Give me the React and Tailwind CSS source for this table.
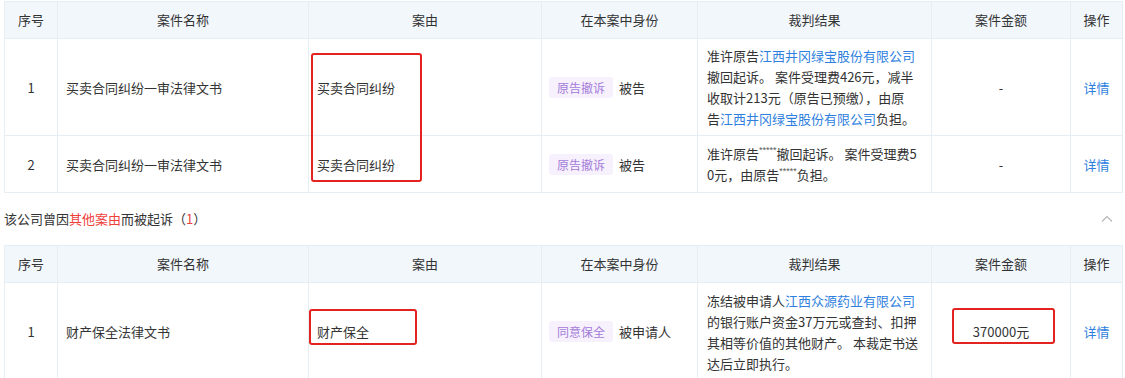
import React from "react";

const font = { fontFamily: '"Noto Sans CJK SC", "Liberation Sans", sans-serif' };

function Link({ children }) {
  return <span className="text-[#2f7fe0]">{children}</span>;
}

function Stars() {
  return (
    <span
      className="inline-block align-top text-[9px] leading-[14px] text-[#555]"
      style={{ fontFamily: '"Liberation Sans", sans-serif' }}
    >
      *****
    </span>
  );
}

function Tag({ children }) {
  return (
    <span className="inline-flex h-[21px] items-center rounded-[3px] bg-[#f7f1fd] px-[8px] text-[12px] leading-[21px] text-[#a47bd9]">
      {children}
    </span>
  );
}

function Header() {
  return (
    <thead>
      <tr className="h-[37px] bg-[#f2f7fc] text-[13px] text-[#333]">
        <th className="border border-[#e6edf3] p-0 font-normal">序号</th>
        <th className="border border-[#e6edf3] p-0 font-normal">案件名称</th>
        <th className="border border-[#e6edf3] p-0 font-normal">案由</th>
        <th className="border border-[#e6edf3] p-0 font-normal">在本案中身份</th>
        <th className="border border-[#e6edf3] p-0 font-normal">裁判结果</th>
        <th className="border border-[#e6edf3] p-0 font-normal">案件金额</th>
        <th className="border border-[#e6edf3] p-0 font-normal">操作</th>
      </tr>
    </thead>
  );
}

function Cols() {
  return (
    <colgroup>
      <col style={{ width: 53 }} />
      <col style={{ width: 251 }} />
      <col style={{ width: 233 }} />
      <col style={{ width: 156 }} />
      <col style={{ width: 234 }} />
      <col style={{ width: 139 }} />
      <col style={{ width: 52 }} />
    </colgroup>
  );
}

const td = "border border-[#e6edf3] px-[8px] py-0 align-middle";

function Row({ no, name, cause, tag, role, result, amount, h }) {
  return (
    <tr className={"text-[13px] leading-[21px] text-[#333] " + h}>
      <td className={td + " text-center"}>{no}</td>
      <td className={td}>{name}</td>
      <td className={td}>{cause}</td>
      <td className={td + " pl-[7px]"}>
        <div className="flex h-[21px] items-center gap-[6px]">
          <Tag>{tag}</Tag>
          <span>{role}</span>
        </div>
      </td>
      <td className={td + " pl-[9px]"}>
        {result.map((l, i) => (
          <div key={i} className="h-[21px] whitespace-nowrap leading-[21px]">{l}</div>
        ))}
      </td>
      <td className={td + " text-center"}>{amount}</td>
      <td className={td + " text-center text-[#2f7fe0]"}>详情</td>
    </tr>
  );
}

export default function App() {
  return (
    <div className="relative h-[378px] w-[1125px] overflow-hidden bg-white" style={font}>
      <div className="pl-[4px] pt-[1px]">
        <table className="w-[1118px] table-fixed border-collapse">
          <Cols />
          <Header />
          <tbody>
            <Row
              h="h-[97px]"
              no="1"
              name="买卖合同纠纷一审法律文书"
              cause="买卖合同纠纷"
              tag="原告撤诉"
              role="被告"
              amount="-"
              result={[
                <>准许原告<Link>江西井冈绿宝股份有限公司</Link></>,
                <>撤回起诉。 案件受理费426元，减半</>,
                <>收取计213元（原告已预缴），由原</>,
                <>告<Link>江西井冈绿宝股份有限公司</Link>负担。</>,
              ]}
            />
            <Row
              h="h-[57px]"
              no="2"
              name="买卖合同纠纷一审法律文书"
              cause="买卖合同纠纷"
              tag="原告撤诉"
              role="被告"
              amount="-"
              result={[
                <>准许原告<Stars />撤回起诉。 案件受理费5</>,
                <>0元，由原告<Stars />负担。</>,
              ]}
            />
          </tbody>
        </table>

        <div className="flex h-[52px] items-center justify-between pr-[10px] text-[13px] text-[#333]">
          <span>
            该公司曾因<span className="text-[#f0403c]">其他案由</span>而被起诉（<span className="text-[#f0403c]">1</span>）
          </span>
          <svg width="12" height="8" viewBox="0 0 12 8" className="mr-[2px]">
            <path d="M1 6.5 L6 1.5 L11 6.5" fill="none" stroke="#b5b5b5" strokeWidth="1.1" />
          </svg>
        </div>

        <table className="w-[1118px] table-fixed border-collapse">
          <Cols />
          <Header />
          <tbody>
            <Row
              h="h-[98px]"
              no="1"
              name="财产保全法律文书"
              cause="财产保全"
              tag="同意保全"
              role="被申请人"
              amount="370000元"
              result={[
                <>冻结被申请人<Link>江西众源药业有限公司</Link></>,
                <>的银行账户资金37万元或查封、扣押</>,
                <>其相等价值的其他财产。 本裁定书送</>,
                <>达后立即执行。</>,
              ]}
            />
          </tbody>
        </table>
      </div>

      <div className="pointer-events-none absolute left-[311px] top-[53px] h-[129px] w-[111px] rounded-[3px] border-2 border-[#e3231f]" />
      <div className="pointer-events-none absolute left-[309px] top-[309px] h-[36px] w-[108px] rounded-[3px] border-2 border-[#e3231f]" />
      <div className="pointer-events-none absolute left-[952px] top-[308px] h-[36px] w-[103px] rounded-[3px] border-2 border-[#e3231f]" />
    </div>
  );
}
